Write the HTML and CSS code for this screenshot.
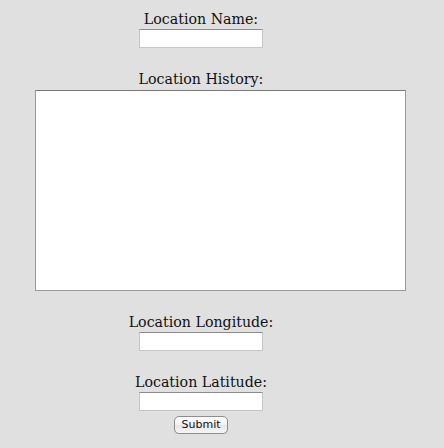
FILE: index.html
```html
<!DOCTYPE html>
<html>
<head>
<meta charset="utf-8">
<link rel="stylesheet" href="styles.css">
</head>
<body>
<form class="form">
  <div class="group">
    <label class="label" for="name">Location Name:</label>
    <input class="field" id="name" type="text">
  </div>
  <div class="group">
    <label class="label" for="history">Location History:</label>
    <textarea class="area" id="history"></textarea>
  </div>
  <div class="group">
    <label class="label" for="lng">Location Longitude:</label>
    <input class="field" id="lng" type="text">
  </div>
  <div class="group last">
    <label class="label" for="lat">Location Latitude:</label>
    <input class="field" id="lat" type="text">
  </div>
  <button class="submit" type="button">Submit</button>
</form>
</body>
</html>
```
FILE: styles.css
```css
html, body {
  margin: 0;
  padding: 0;
  background: #e0e0e0;
}
body {
  padding-top: 9px;
}
.form {
  width: 402px;
  display: flex;
  flex-direction: column;
  align-items: center;
  margin: 0;
}
.group {
  display: flex;
  flex-direction: column;
  align-items: center;
  margin-bottom: 21px;
  width: 100%;
}
.group.last {
  margin-bottom: 5px;
}
.label {
  display: block;
  font-family: "DejaVu Serif", "Liberation Serif", serif;
  font-size: 14.2px;
  line-height: 20px;
  height: 20px;
  color: #111;
  text-align: center;
  white-space: nowrap;
}
.field {
  box-sizing: border-box;
  width: 124px;
  height: 19px;
  margin: 0;
  padding: 0 2px;
  background: #fff;
  border: 1px solid #c6c6c6;
  border-top-color: #8c8c8c;
  outline: none;
}
.area {
  box-sizing: border-box;
  align-self: flex-start;
  margin: 1px 0 0 35px;
  width: 371px;
  height: 201px;
  padding: 2px;
  background: #fff;
  border: 1px solid #9a9a9a;
  border-top-color: #7a7a7a;
  resize: none;
  outline: none;
}
.submit {
  box-sizing: border-box;
  width: 54px;
  height: 18px;
  padding: 0;
  font-family: "DejaVu Sans", "Liberation Sans", sans-serif;
  font-size: 11px;
  line-height: 16px;
  color: #111;
  background: linear-gradient(#ffffff, #f1f1f1 50%, #e6e6e6 51%, #f6f6f6);
  border: 1px solid #8e8e8e;
  border-radius: 5px;
  box-shadow: 0 1px 1px rgba(0, 0, 0, 0.12);
}
```
